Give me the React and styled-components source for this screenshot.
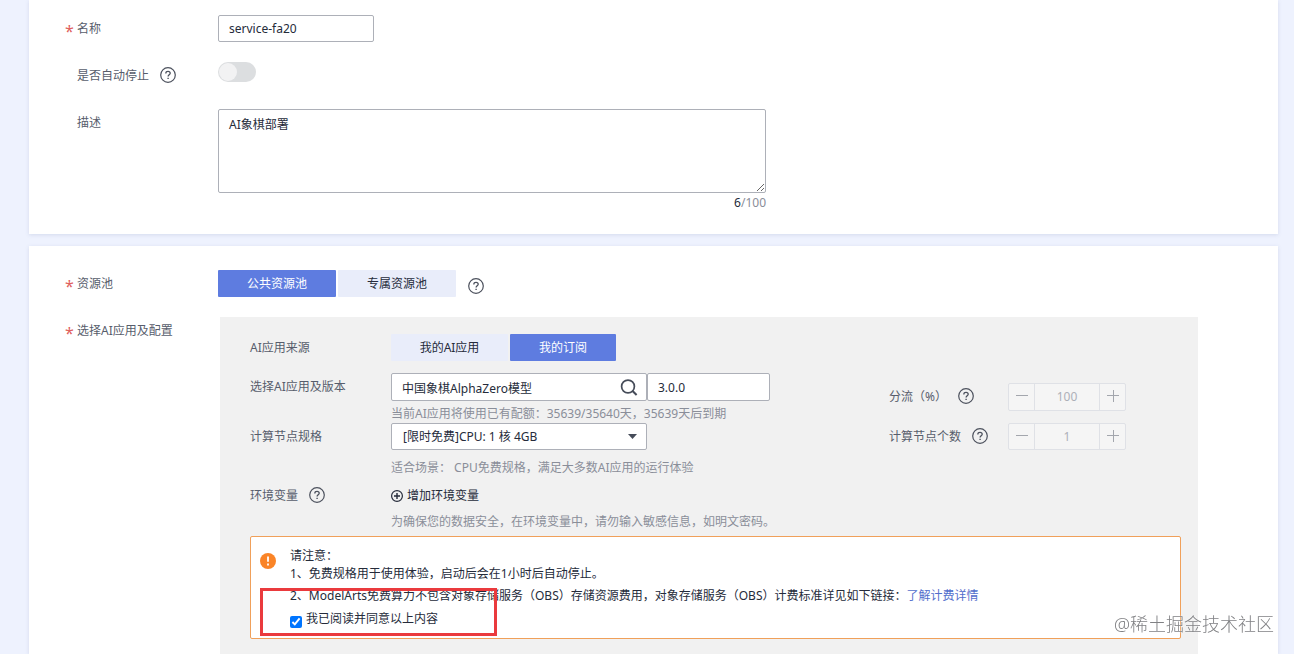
import React, { useState } from "react";
import styled, { createGlobalStyle, css } from "styled-components";

const GlobalStyle = createGlobalStyle`
  *, *::before, *::after { box-sizing: border-box; }
  body {
    margin: 0;
    background: #eef2fe;
    color: #252b3a;
    font-family: "Noto Sans", "Noto Sans CJK SC", sans-serif;
    font-size: 12px;
    line-height: 18px;
  }
  button, input, select, textarea { font: inherit; color: inherit; margin: 0; }
`;

const Page = styled.main`
  display: flex;
  flex-direction: column;
  gap: 12px;
  min-height: 100vh;
  padding: 0 16px 0 29px;
`;

const Card = styled.section`
  display: flex;
  flex-direction: column;
  gap: 20px;
  padding: ${(p) => (p.$fill ? "24px 80px 0 36px" : "15px 80px 22px 36px")};
  background: #fff;
  box-shadow: 0 1px 4px rgba(80, 100, 150, 0.16);
  ${(p) => p.$fill && css`flex: 1;`}
`;

const FormRow = styled.div`
  display: grid;
  grid-template-columns: 12px 141px minmax(0, 1fr);
  min-height: 27px;
  ${(p) => p.$fill && css`flex: 1;`}
`;

const Star = styled.span`
  height: 27px;
  color: #e0605e;
  font-size: 16px;
  line-height: 32px;
`;

const HelpButton = styled.button`
  display: flex;
  padding: 0;
  border: 0;
  background: none;
  color: #4c515d;
`;

const Caption = styled.div`
  display: flex;
  align-items: center;
  gap: ${(p) => p.$gap || 11}px;
  height: ${(p) => p.$height || 27}px;
  color: #575d6c;
  white-space: nowrap;
  ${HelpButton} { margin-bottom: 2px; }
`;

const fieldStyle = css`
  border: 1px solid #adb0b8;
  border-radius: 2px;
  background: #fff;
  color: #252b3a;
  outline: none;
`;

const TextField = styled.input`
  ${fieldStyle}
  width: ${(p) => p.$width}px;
  height: ${(p) => p.$height || 27}px;
  padding: 0 10px;
`;

const Switch = styled.input`
  appearance: none;
  display: block;
  width: 38px;
  height: 20px;
  border-radius: 10px;
  background: #dcdee0;
  &::before {
    content: "";
    display: block;
    width: 18px;
    height: 18px;
    margin: 1px;
    border-radius: 50%;
    background: #f2f2f3;
  }
  &:checked { background: #5e7ce0; }
  &:checked::before { margin-left: 19px; }
`;

const DescriptionBox = styled.div`
  width: 548px;
`;

const TextArea = styled.textarea`
  ${fieldStyle}
  display: block;
  width: 100%;
  height: 84px;
  padding: 6px 10px;
  resize: vertical;
`;

const Counter = styled.div`
  padding-top: 1px;
  color: #8a8e99;
  text-align: right;
  b { color: #252b3a; font-weight: 400; }
`;

const Tabs = styled.div`
  display: flex;
  align-items: flex-start;
  gap: 2px;
  ${HelpButton} { margin: 8px 0 0 10px; }
`;

const Tab = styled.button`
  width: ${(p) => p.$width}px;
  height: 27px;
  padding: 0;
  border: 0;
  border-radius: 1px;
  background: ${(p) => (p.$active ? "#5e7ce0" : "#e9edfa")};
  color: ${(p) => (p.$active ? "#fff" : "#252b3a")};
`;

const Panel = styled.div`
  display: flex;
  flex-direction: column;
  gap: 12px;
  margin-left: 2px;
  padding: 17px 17px 15px 30px;
  background: #f1f1f1;
`;

const PanelRow = styled.div`
  display: grid;
  grid-template-columns: 141px minmax(0, 1fr);
`;

const Columns = styled.div`
  display: flex;
`;

const MainColumn = styled.div`
  flex: 1;
  min-width: 0;
`;

const SideColumn = styled.div`
  display: flex;
  flex-direction: column;
  gap: 12px;
  width: 292px;
  padding-top: 10px;
`;

const SideRow = styled.div`
  display: grid;
  grid-template-columns: 119px 118px;
`;

const Hint = styled.p`
  margin: 0;
  padding: ${(p) => (p.$loose ? "9px 0 5px" : "4px 0 0")};
  color: #8a8e99;
  white-space: nowrap;
`;

const FieldGroup = styled.div`
  display: flex;
`;

const SearchBox = styled.div`
  ${fieldStyle}
  display: flex;
  align-items: center;
  width: 256px;
  height: 28px;
  padding-right: 8px;
  input {
    flex: 1;
    min-width: 0;
    height: 26px;
    padding: 1px 10px 0;
    border: 0;
    background: none;
    outline: none;
  }
  button {
    display: flex;
    padding: 0;
    border: 0;
    background: none;
    color: #464c59;
  }
`;

const SelectBox = styled.div`
  ${fieldStyle}
  display: grid;
  align-items: center;
  width: 256px;
  height: 27px;
  select, svg { grid-area: 1 / 1; }
  select {
    appearance: none;
    width: 100%;
    height: 25px;
    padding: 0 24px 0 11px;
    border: 0;
    background: none;
    outline: none;
  }
  svg { justify-self: end; margin-right: 9px; pointer-events: none; }
`;

const StepperBox = styled.div`
  display: grid;
  grid-template-columns: 25px minmax(0, 1fr) 25px;
  height: ${(p) => p.$height || 27}px;
  border: 1px solid #dfe1e6;
  border-radius: 2px;
  background: #f5f5f5;
  color: #adb0b8;
  input {
    width: 100%;
    padding: 0;
    border: solid #dfe1e6;
    border-width: 0 1px;
    background: none;
    text-align: center;
  }
  button {
    display: grid;
    place-items: center;
    padding: 0 0 2px;
    border: 0;
    background: none;
    color: #a3a6ad;
  }
`;

const AddButton = styled.button`
  display: flex;
  align-items: center;
  gap: 4px;
  height: 27px;
  padding: 0;
  border: 0;
  background: none;
  color: #252b3a;
`;

const Notice = styled.div`
  position: relative;
  display: flex;
  gap: 14px;
  margin-top: -7px;
  padding: 10px 9px;
  border: 1px solid #f0a05a;
  border-radius: 2px;
  background: #fff;
  color: #252b3a;
  > svg { flex: none; margin-top: 6px; }
`;

const NoticeText = styled.div`
  p { margin: 0; }
  p:nth-child(3) { margin-top: 4px; }
  a { color: #526ecc; text-decoration: none; }
`;

const Agreement = styled.label`
  display: flex;
  align-items: flex-end;
  gap: 4px;
  margin-top: 5px;
  input { width: 12px; height: 12px; accent-color: #0075ff; }
`;

const Highlight = styled.div`
  position: absolute;
  left: 9px;
  top: 51px;
  width: 237px;
  height: 48px;
  border: 3px solid #ea3a3d;
  pointer-events: none;
`;

const Watermark = styled.div`
  position: fixed;
  right: 20px;
  bottom: 17px;
  color: #808184;
  font-size: 18px;
  line-height: 26px;
  font-weight: 300;
  text-shadow: 0 0 2px #fff;
  pointer-events: none;
`;

function Help() {
  return (
    <HelpButton type="button" aria-label="帮助">
      <svg width="16" height="16" viewBox="0 0 16 16" fill="none" stroke="currentColor" strokeWidth="1.2">
        <circle cx="8" cy="8" r="7.3" />
        <path d="M5.8 6.4C5.8 5 6.7 4.3 8 4.3s2.2.8 2.2 1.9c0 1.6-2.1 1.7-2.1 3.4" strokeWidth="1.3" />
        <path d="M8.1 10.7v1.4" strokeWidth="1.4" />
      </svg>
    </HelpButton>
  );
}

function Stepper({ id, value, height }) {
  return (
    <StepperBox $height={height}>
      <button type="button" disabled aria-label="减少">
        <svg width="12" height="12" viewBox="0 0 12 12" stroke="currentColor"><path d="M0 5.5h12" /></svg>
      </button>
      <input id={id} value={value} disabled readOnly />
      <button type="button" disabled aria-label="增加">
        <svg width="12" height="12" viewBox="0 0 12 12" stroke="currentColor"><path d="M0 5.5h12M6.5 0v12" /></svg>
      </button>
    </StepperBox>
  );
}

export default function App() {
  const [name, setName] = useState("service-fa20");
  const [autoStop, setAutoStop] = useState(false);
  const [description, setDescription] = useState("AI象棋部署");
  const [pool, setPool] = useState(0);
  const [source, setSource] = useState(1);
  const [agreed, setAgreed] = useState(true);

  return (
    <>
      <GlobalStyle />
      <Page>
        <Card>
          <FormRow>
            <Star>*</Star>
            <Caption as="label" htmlFor="name">名称</Caption>
            <TextField id="name" $width={156} value={name} onChange={(e) => setName(e.target.value)} />
          </FormRow>
          <FormRow>
            <span />
            <Caption>
              <label htmlFor="auto-stop">是否自动停止</label>
              <Help />
            </Caption>
            <Switch id="auto-stop" type="checkbox" role="switch" checked={autoStop} onChange={(e) => setAutoStop(e.target.checked)} />
          </FormRow>
          <FormRow>
            <span />
            <Caption as="label" htmlFor="description">描述</Caption>
            <DescriptionBox>
              <TextArea id="description" maxLength={100} value={description} onChange={(e) => setDescription(e.target.value)} />
              <Counter><b>{description.length}</b>/100</Counter>
            </DescriptionBox>
          </FormRow>
        </Card>

        <Card $fill>
          <FormRow>
            <Star>*</Star>
            <Caption>资源池</Caption>
            <Tabs>
              <Tab type="button" $width={118} $active={pool === 0} onClick={() => setPool(0)}>公共资源池</Tab>
              <Tab type="button" $width={118} $active={pool === 1} onClick={() => setPool(1)}>专属资源池</Tab>
              <Help />
            </Tabs>
          </FormRow>
          <FormRow $fill>
            <Star>*</Star>
            <Caption>选择AI应用及配置</Caption>
            <Panel>
              <PanelRow>
                <Caption>AI应用来源</Caption>
                <Tabs>
                  <Tab type="button" $width={117} $active={source === 0} onClick={() => setSource(0)}>我的AI应用</Tab>
                  <Tab type="button" $width={106} $active={source === 1} onClick={() => setSource(1)}>我的订阅</Tab>
                </Tabs>
              </PanelRow>
              <Columns>
                <MainColumn>
                  <PanelRow>
                    <Caption as="label" htmlFor="app">选择AI应用及版本</Caption>
                    <div>
                      <FieldGroup>
                        <SearchBox>
                          <input id="app" defaultValue="中国象棋AlphaZero模型" />
                          <button type="button" aria-label="搜索">
                            <svg width="18" height="18" viewBox="0 0 18 18" fill="none" stroke="currentColor" strokeWidth="1.7">
                              <circle cx="8" cy="8.5" r="6.4" />
                              <path d="M12.6 13l4 4" strokeWidth="2" />
                            </svg>
                          </button>
                        </SearchBox>
                        <TextField aria-label="版本" $width={123} $height={28} defaultValue="3.0.0" />
                      </FieldGroup>
                      <Hint>当前AI应用将使用已有配额：35639/35640天，35639天后到期</Hint>
                    </div>
                  </PanelRow>
                  <PanelRow>
                    <Caption as="label" htmlFor="flavor">计算节点规格</Caption>
                    <div>
                      <SelectBox>
                        <select id="flavor">
                          <option>[限时免费]CPU: 1 核 4GB</option>
                        </select>
                        <svg width="9" height="5" viewBox="0 0 9 5" fill="#464c59"><path d="M0 0h9L4.5 5z" /></svg>
                      </SelectBox>
                      <Hint $loose>适合场景： CPU免费规格，满足大多数AI应用的运行体验</Hint>
                    </div>
                  </PanelRow>
                  <PanelRow>
                    <Caption>环境变量 <Help /></Caption>
                    <div>
                      <AddButton type="button">
                        <svg width="12" height="12" viewBox="0 0 12 12" fill="none" stroke="currentColor">
                          <circle cx="6" cy="6" r="5.4" strokeWidth="1.2" />
                          <path d="M3 6h6M6 3v6" strokeWidth="1.4" />
                        </svg>
                        增加环境变量
                      </AddButton>
                      <Hint>为确保您的数据安全，在环境变量中，请勿输入敏感信息，如明文密码。</Hint>
                    </div>
                  </PanelRow>
                </MainColumn>
                <SideColumn>
                  <SideRow>
                    <Caption $height={28}><label htmlFor="traffic">分流（%）</label><Help /></Caption>
                    <Stepper id="traffic" value="100" height={28} />
                  </SideRow>
                  <SideRow>
                    <Caption><label htmlFor="nodes">计算节点个数</label><Help /></Caption>
                    <Stepper id="nodes" value="1" />
                  </SideRow>
                </SideColumn>
              </Columns>
              <Notice>
                <svg width="16" height="16" viewBox="0 0 16 16">
                  <circle cx="8" cy="8" r="8" fill="#fa8427" />
                  <path d="M8 3.6v5.2M8 10.6v1.8" stroke="#fff" strokeWidth="1.8" />
                </svg>
                <NoticeText>
                  <p>请注意：</p>
                  <p>1、免费规格用于使用体验，启动后会在1小时后自动停止。</p>
                  <p>2、ModelArts免费算力不包含对象存储服务（OBS）存储资源费用，对象存储服务（OBS）计费标准详见如下链接：<a href="#pricing">了解计费详情</a></p>
                  <Agreement>
                    <input type="checkbox" checked={agreed} onChange={(e) => setAgreed(e.target.checked)} />
                    我已阅读并同意以上内容
                  </Agreement>
                </NoticeText>
                <Highlight />
              </Notice>
            </Panel>
          </FormRow>
        </Card>
      </Page>
      <Watermark>@稀土掘金技术社区</Watermark>
    </>
  );
}
